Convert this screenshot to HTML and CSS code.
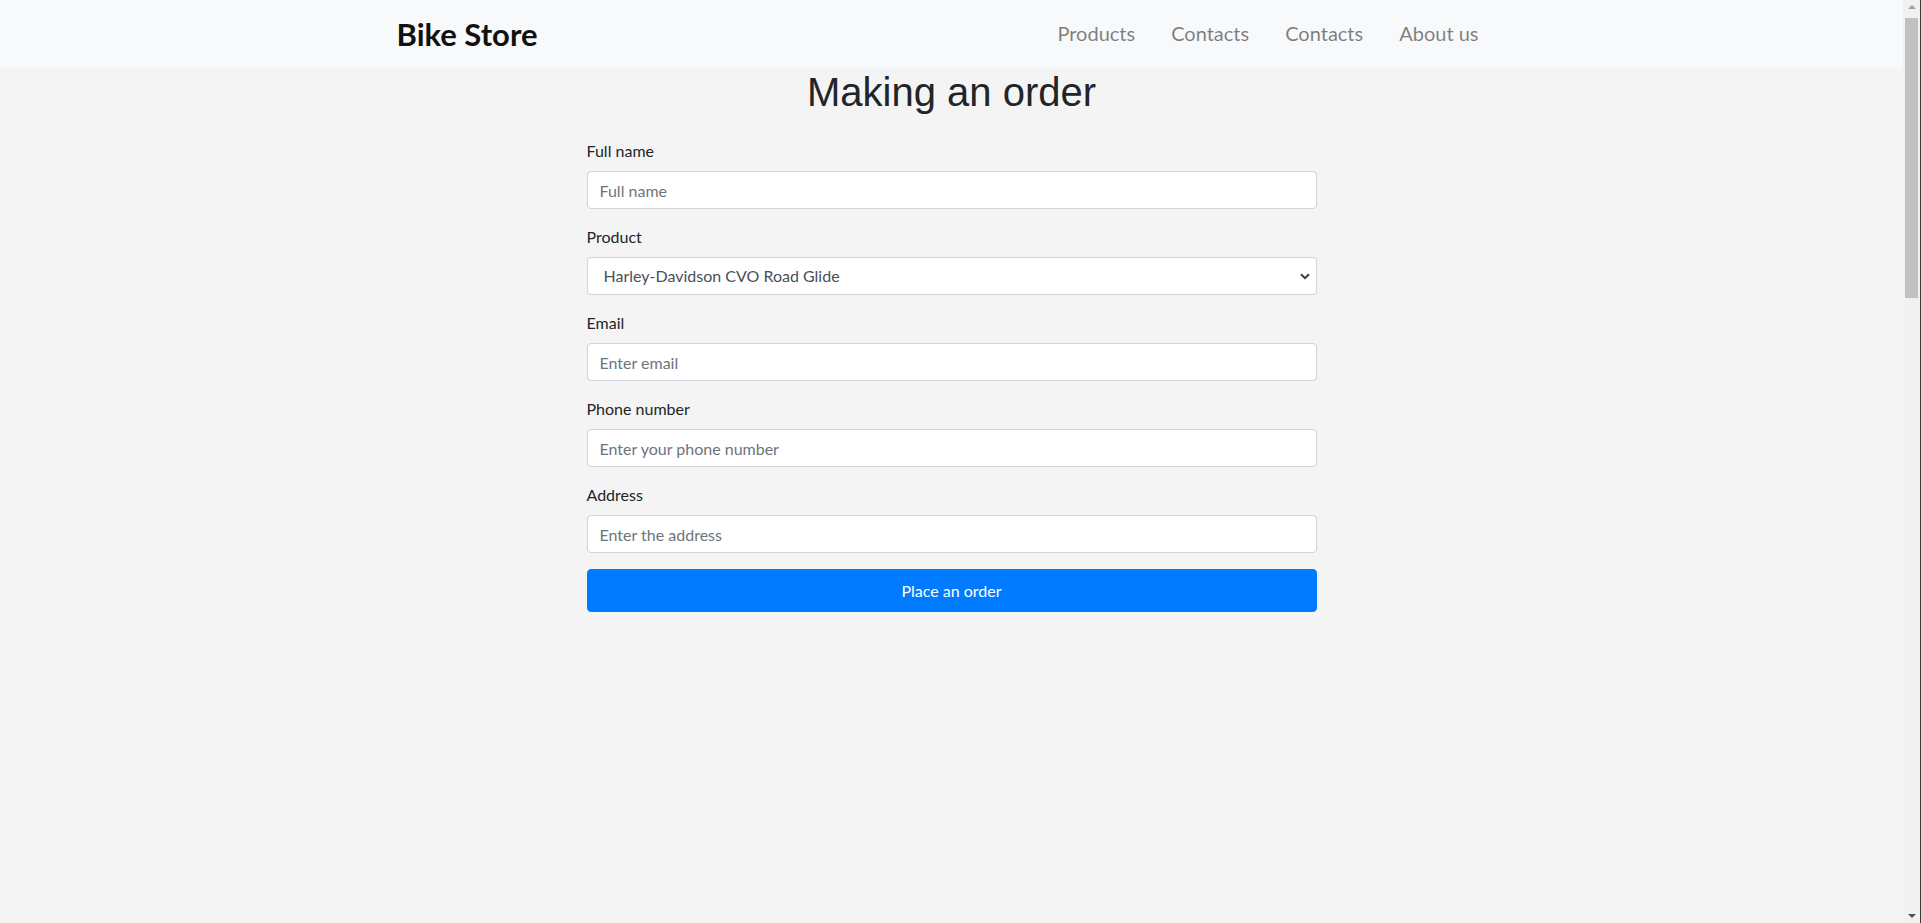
FILE: index.html
```html
<!DOCTYPE html>
<html lang="en">
<head>
<meta charset="utf-8">
<title>Bike Store</title>
<link rel="stylesheet" href="styles.css">
</head>
<body>
<header class="navbar">
  <div class="container nav-inner">
    <a class="brand" href="#">Bike Store</a>
    <ul class="nav-links">
      <li><a href="#">Products</a></li>
      <li><a href="#">Contacts</a></li>
      <li><a href="#">Contacts</a></li>
      <li><a href="#">About us</a></li>
    </ul>
  </div>
</header>
<main class="container">
  <h1 class="title">Making an order</h1>
  <form class="order-form">
    <div class="form-group">
      <label for="name">Full name</label>
      <input id="name" class="form-control" type="text" placeholder="Full name">
    </div>
    <div class="form-group">
      <label for="product">Product</label>
      <div class="select-wrap">
        <select id="product" class="form-control select">
          <option>Harley-Davidson CVO Road Glide</option>
        </select>
        <svg class="chevron" width="10" height="7" viewBox="0 0 10 7"><path d="M1 1.2 L5 5.2 L9 1.2" fill="none" stroke="#3c3c3c" stroke-width="2"/></svg>
      </div>
    </div>
    <div class="form-group">
      <label for="email">Email</label>
      <input id="email" class="form-control" type="email" placeholder="Enter email">
    </div>
    <div class="form-group">
      <label for="phone">Phone number</label>
      <input id="phone" class="form-control" type="text" placeholder="Enter your phone number">
    </div>
    <div class="form-group">
      <label for="address">Address</label>
      <input id="address" class="form-control" type="text" placeholder="Enter the address">
    </div>
    <button type="button" class="btn-primary">Place an order</button>
  </form>
</main>
<div class="scrollbar">
  <div class="sb-arrow sb-up"></div>
  <div class="sb-thumb"></div>
  <div class="sb-arrow sb-down"></div>
</div>
<div class="window-edge"></div>
</body>
</html>
```
FILE: styles.css
```css
* { box-sizing: border-box; }
html, body { height: 100%; overflow: hidden; }
body {
  margin: 0;
  padding-right: 18px;
  background: #f4f4f4;
  color: #212529;
  font-family: Lato, "Noto Sans", sans-serif;
  font-size: 16px;
  line-height: 1.5;
}
.container {
  width: 1140px;
  margin: 0 auto;
  padding: 0 15px;
}
.navbar {
  background: #f8f9fa;
  height: 68px;
}
.nav-inner {
  height: 100%;
  display: flex;
  align-items: center;
  justify-content: space-between;
}
.brand {
  font-family: Lato, "Noto Sans", sans-serif;
  font-weight: 700;
  font-size: 31px;
  color: #111;
  text-decoration: none;
  margin-top: 0;
}
.nav-links {
  list-style: none;
  margin: 0 28px 2px 0;
  padding: 0;
  display: flex;
  gap: 36px;
}
.nav-links a {
  font-size: 20px;
  color: rgba(0,0,0,.5);
  text-decoration: none;
  font-weight: 400;
}
.title {
  margin: 0 0 23px;
  text-align: center;
  font-family: "Liberation Sans", Arial, sans-serif;
  font-weight: 400;
  font-size: 40px;
  line-height: 48px;
}
.order-form {
  width: 730px;
  margin: 0 auto;
}
.form-group { margin-bottom: 16px; }
.form-group label {
  display: block;
  margin-bottom: 8px;
  font-size: 16px;
  line-height: 24px;
}
.form-control {
  display: block;
  width: 100%;
  height: 38px;
  padding: 6px 12px;
  font-family: Lato, "Noto Sans", sans-serif;
  font-size: 16px;
  line-height: 24px;
  color: #495057;
  background: #fff;
  border: 1px solid #ced4da;
  border-radius: 4px;
  outline: none;
}
.form-control::placeholder { color: #6c757d; opacity: 1; }
.select-wrap { position: relative; }
.select {
  appearance: none;
  -webkit-appearance: none;
  padding-left: 16px;
}
.chevron {
  position: absolute;
  right: 7px;
  top: 16px;
  pointer-events: none;
}
.btn-primary {
  display: block;
  width: 100%;
  height: 43px;
  border: 1px solid #007bff;
  border-radius: 4px;
  background: #007bff;
  color: #fff;
  font-family: Lato, "Noto Sans", sans-serif;
  font-size: 16px;
  line-height: 24px;
}
.scrollbar {
  position: fixed;
  top: 0;
  right: 1px;
  width: 17px;
  height: 100%;
  background: #f1f1f1;
}
.sb-thumb {
  position: absolute;
  left: 2px;
  right: 2px;
  top: 18px;
  height: 280px;
  background: #c1c1c1;
}
.sb-arrow {
  position: absolute;
  left: 5px;
  width: 0;
  height: 0;
  border-left: 4px solid transparent;
  border-right: 4px solid transparent;
}
.sb-up { top: 5px; border-bottom: 4px solid #a3a3a3; }
.sb-down { bottom: 5px; border-top: 4px solid #505050; }
.window-edge {
  position: fixed;
  top: 0;
  right: 0;
  width: 1px;
  height: 100%;
  background: #3a3a3a;
}
```
